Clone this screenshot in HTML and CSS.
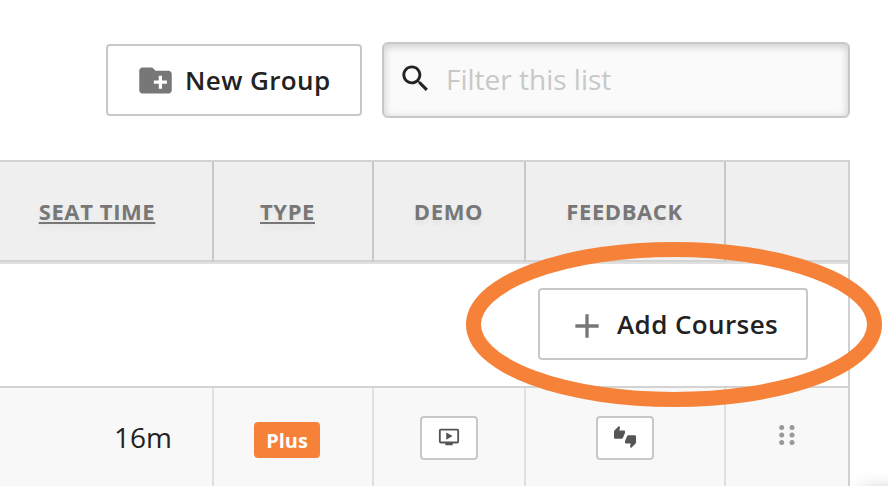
FILE: index.html
```html
<!DOCTYPE html>
<html lang="en">
<head>
    <meta charset="UTF-8">
    <meta name="viewport" content="width=device-width, initial-scale=1.0">
    <title>Courses</title>
    <link rel="stylesheet" href="styles.css">
</head>
<body>
    <div class="toolbar">
        <button class="btn btn-new">
            <svg class="icon icon-lg" viewBox="0 0 24 24"><path d="M20 6h-8l-2-2H4c-1.11 0-1.99.89-1.99 2L2 18c0 1.11.89 2 2 2h16c1.11 0 2-.89 2-2V8c0-1.11-.89-2-2-2zm-1 8h-3v3h-2v-3h-3v-2h3V9h2v3h3v2z"/></svg>
            <span>New Group</span>
        </button>
        <div class="filter">
            <svg class="icon icon-search" viewBox="0 0 24 24"><path d="M15.5 14h-.79l-.28-.27C15.41 12.59 16 11.11 16 9.5 16 5.91 13.09 3 9.5 3S3 5.91 3 9.5 5.91 16 9.5 16c1.61 0 3.09-.59 4.23-1.57l.27.28v.79l5 4.99L20.49 19l-4.99-5zm-6 0C7.01 14 5 11.99 5 9.5S7.01 5 9.5 5 14 7.01 14 9.5 11.99 14 9.5 14z"/></svg>
            <input type="text" placeholder="Filter this list">
        </div>
    </div>

    <div class="course-table">
        <div class="row row-head">
            <div class="cell cell-seat"><a href="#">SEAT TIME</a></div>
            <div class="cell cell-kind"><a href="#">TYPE</a></div>
            <div class="cell"><span>DEMO</span></div>
            <div class="cell"><span>FEEDBACK</span></div>
            <div class="cell"></div>
        </div>
        <div class="group-row">
            <button class="btn btn-add">
                <svg class="icon icon-lg" viewBox="0 0 24 24"><path d="M19 13h-6v6h-2v-6H5v-2h6V5h2v6h6v2z"/></svg>
                <span>Add Courses</span>
            </button>
        </div>
        <div class="row row-course">
            <div class="cell cell-time">16m</div>
            <div class="cell cell-type"><span class="badge">Plus</span></div>
            <div class="cell">
                <button class="btn-small" aria-label="Demo">
                    <svg class="icon" viewBox="0 0 24 24"><path d="M21 3H3c-1.11 0-2 .89-2 2v12c0 1.1.89 2 2 2h5v2h8v-2h5c1.1 0 1.99-.9 1.99-2L23 5c0-1.11-.9-2-2-2zm0 14H3V5h18v12zm-5-6l-7 4V7z"/></svg>
                </button>
            </div>
            <div class="cell">
                <button class="btn-small" aria-label="Feedback">
                    <svg class="icon" viewBox="0 0 24 24"><path d="M12 6c0-.55-.45-1-1-1H5.82l.66-3.18.02-.23c0-.31-.13-.59-.33-.8L5.38 0 .44 4.94C.17 5.21 0 5.59 0 6v6.5c0 .83.67 1.5 1.5 1.5h6.75c.62 0 1.15-.38 1.38-.91l2.26-5.29c.07-.17.11-.36.11-.55V6zm10.5 4h-6.75c-.62 0-1.15.38-1.38.91l-2.26 5.29c-.07.17-.11.36-.11.55V18c0 .55.45 1 1 1h5.18l-.66 3.18-.02.24c0 .31.13.59.33.8l.79.78 4.94-4.94c.27-.27.44-.65.44-1.06v-6.5c0-.83-.67-1.5-1.5-1.5z"/></svg>
                </button>
            </div>
            <div class="cell cell-drag">
                <svg class="drag-handle" viewBox="0 0 16 20">
                    <circle cx="2.7" cy="2.5" r="2.5"/><circle cx="13" cy="2.5" r="2.5"/>
                    <circle cx="2.7" cy="10" r="2.5"/><circle cx="13" cy="10" r="2.5"/>
                    <circle cx="2.7" cy="17.5" r="2.5"/><circle cx="13" cy="17.5" r="2.5"/>
                </svg>
            </div>
        </div>
    </div>

    <!-- highlight around the Add Courses button -->
    <svg class="highlight" viewBox="0 0 416 165"><ellipse cx="208" cy="82.5" rx="200.5" ry="75"/></svg>
    <div class="panel-shadow"></div>
</body>
</html>
```

FILE: styles.css
```css
* { margin: 0; padding: 0; box-sizing: border-box; }
body {
    font-family: 'Open Sans', sans-serif;
    background-color: #fff;
    color: #222;
    height: 486px;
    position: relative;
    overflow: hidden;
}
.toolbar {
    display: flex; justify-content: flex-end; align-items: center; gap: 20px;
    width: 850px; padding-top: 42px;
}
.icon { display: block; flex: none; width: 22px; height: 22px; fill: #555; }
.icon-lg { width: 40px; height: 40px; fill: #777; }
.icon-search { width: 35px; height: 35px; fill: #222; margin-top: -4px; }
.btn {
    display: flex; align-items: center; height: 72px;
    background-color: #fff; border: 2px solid #c8c8c8; border-radius: 4px;
    font-family: inherit; font-size: 26px; font-weight: 600; color: #222;
    letter-spacing: 0.4px; white-space: nowrap;
}
.btn-new { width: 256px; padding-left: 28px; gap: 10px; }
.btn-new .icon { width: 39px; height: 39px; margin-top: 1px; }
.btn-add { width: 270px; padding-left: 27px; gap: 10px; }
.btn-add .icon { margin-top: 4px; }
.filter {
    display: flex; align-items: center; gap: 13px;
    width: 468px; height: 76px; padding: 0 13px 0 14px;
    background-color: #fafafa; border: 2px solid #c8c8c8; border-radius: 6px;
    box-shadow: inset 0 2px 8px rgba(0, 0, 0, 0.2);
}
.filter input {
    flex: 1; min-width: 0; border: none; outline: none; background: none;
    font-family: inherit; font-size: 28px; color: #222; padding-bottom: 2px;
}
.filter input::placeholder { color: #c8c8c8; opacity: 1; }
.course-table {
    width: 850px; height: 326px; margin-top: 42px;
    border-right: 2px solid #d0d0d0;
}
.row { display: grid; grid-template-columns: 214px 160px 152px 200px 122px; }
.cell { display: flex; justify-content: center; align-items: center; border-right: 2px solid #e0e0e0; }
.cell:last-child { border-right: none; }
.row-head {
    height: 104px; background-color: #efefef;
    border-top: 2px solid #d3d3d3; border-bottom: 2px solid #e0e0e0;
    font-size: 22px; font-weight: 700; color: #777; letter-spacing: 0.6px;
    text-shadow: 0 4px 4px rgba(0, 0, 0, 0.05);
}
.row-head .cell {
    padding: 0 1px 2px 0;
    border-right-color: #c8c8c8;
    box-shadow: inset 0 -2px #d3d3d3;
}
.row-head a { color: inherit; text-decoration: underline; }
.row-head .cell-seat { padding-right: 18px; }
.row-head .cell-kind { padding-right: 11px; }
.group-row {
    display: flex; justify-content: flex-end; align-items: flex-start;
    height: 124px; padding: 24px 40px 0 0; border-bottom: 2px solid #d3d3d3;
}
.row-course { height: 98px; background-color: #f8f8f8; }
.row-course .cell { align-items: flex-start; padding-top: 28px; }
.row-course .cell-time { justify-content: flex-end; padding: 30px 40px 0 0; font-size: 28px; }
.row-course .cell-type { padding: 34px 12px 0 0; }
.badge {
    width: 66px; height: 36px; border-radius: 4px;
    background-color: #f58238; color: #fff;
    font-size: 20px; font-weight: 700; line-height: 37px; text-align: center;
}
.btn-small {
    display: flex; justify-content: center; align-items: center;
    width: 58px; height: 44px; padding-bottom: 2px;
    background-color: #fff; border: 2px solid #c8c8c8; border-radius: 4px;
}
.row-course .cell-drag { padding-top: 37px; }
.drag-handle { width: 16px; height: 20px; fill: #999; }
.highlight {
    position: absolute; left: 466px; top: 242px; width: 416px; height: 165px;
    fill: none; stroke: #f58238; stroke-width: 15;
}
.panel-shadow {
    position: absolute; left: 862px; top: 490px; width: 60px; height: 20px;
    box-shadow: 0 0 18px rgba(0, 0, 0, 0.25);
}
```
